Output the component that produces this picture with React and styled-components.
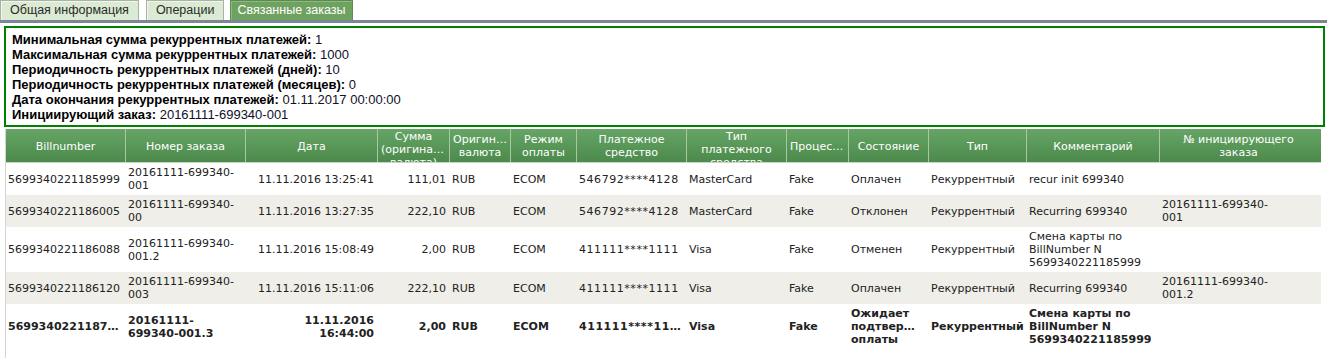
import React from "react";
import styled, { createGlobalStyle } from "styled-components";

const Global = createGlobalStyle`
  html, body { margin: 0; padding: 0; background: #fff; overflow: hidden; }
`;

const COLS = [
  { title: "Billnumber", w: 120, clip: true },
  { title: "Номер заказа", w: 120 },
  { title: "Дата", w: 132, align: "right" },
  { title: "Сумма (оригинальная валюта)", w: 72, align: "right" },
  { title: "Оригинальная валюта", w: 61 },
  { title: "Режим оплаты", w: 66 },
  { title: "Платежное средство", w: 110, clip: true, ls: 0.55 },
  { title: "Тип платежного средства", w: 100 },
  { title: "Процессинг", w: 62 },
  { title: "Состояние", w: 80, clip: true },
  { title: "Тип", w: 98 },
  { title: "Комментарий", w: 133 },
  { title: "№ инициирующего заказа", w: 158, max: 118 },
];
const TEMPLATE = COLS.map((c) => c.w + "px").join(" ") + " 3px";

const ROWS = [
  ["5699340221185999", "20161111-699340-001", "11.11.2016 13:25:41", "111,01", "RUB", "ECOM", "546792****4128", "MasterCard", "Fake", "Оплачен", "Рекуррентный", "recur init 699340", ""],
  ["5699340221186005", "20161111-699340-00", "11.11.2016 13:27:35", "222,10", "RUB", "ECOM", "546792****4128", "MasterCard", "Fake", "Отклонен", "Рекуррентный", "Recurring 699340", "20161111-699340-001"],
  ["5699340221186088", "20161111-699340-001.2", "11.11.2016 15:08:49", "2,00", "RUB", "ECOM", "411111****1111", "Visa", "Fake", "Отменен", "Рекуррентный", "Смена карты по BillNumber N 5699340221185999", ""],
  ["5699340221186120", "20161111-699340-003", "11.11.2016 15:11:06", "222,10", "RUB", "ECOM", "411111****1111", "Visa", "Fake", "Оплачен", "Рекуррентный", "Recurring 699340", "20161111-699340-001.2"],
  ["5699340221187125", "20161111-699340-001.3", "11.11.2016 16:44:00", "2,00", "RUB", "ECOM", "411111****1111", "Visa", "Fake", "Ожидает подтверждения оплаты", "Рекуррентный", "Смена карты по BillNumber N 5699340221185999", ""],
];

const INFO = [
  ["Минимальная сумма рекуррентных платежей:", "1"],
  ["Максимальная сумма рекуррентных платежей:", "1000"],
  ["Периодичность рекуррентных платежей (дней):", "10"],
  ["Периодичность рекуррентных платежей (месяцев):", "0"],
  ["Дата окончания рекуррентных платежей:", "01.11.2017 00:00:00"],
  ["Инициирующий заказ:", "20161111-699340-001"],
];

const Page = styled.div`
  width: 1327px;
`;

const TabBar = styled.div`
  display: flex;
  align-items: flex-end;
  height: 20px;
  border-bottom: 3px solid #7b8798;
`;

const Tab = styled.div`
  box-sizing: border-box;
  height: 20px;
  padding: 0 ${(p) => p.$pad}px;
  margin-right: ${(p) => p.$gap}px;
  font: 12.5px "Liberation Sans", Arial, sans-serif;
  line-height: 19px;
  border: 1px solid ${(p) => (p.$active ? "#5d8c50" : "#aab2a7")};
  border-bottom: none;
  box-shadow: inset 1px 1px 0 ${(p) => (p.$active ? "#8cb97d" : "#f1f7ee")};
  background: ${(p) => (p.$active ? "#6fa160" : "#dbead2")};
  color: ${(p) => (p.$active ? "#fff" : "#2a2a2a")};
  white-space: nowrap;
`;

const InfoBox = styled.div`
  margin: 3px 2px 0 4px;
  border: 2px solid #008000;
  padding: 4px 6px 3px;
  font: 13px "Liberation Sans", Arial, sans-serif;
  line-height: 15px;
  color: #000;
`;

const InfoLine = styled.div`
  white-space: nowrap;
`;

const Label = styled.b`
  font-weight: bold;
`;

const Value = styled.span`
  color: #10102a;
`;

const Grid = styled.div`
  margin: 2px 0 0 5px;
  width: 1316px;
  height: 229px;
  box-sizing: border-box;
  border-left: 1px solid #d4d4d4;
  overflow: hidden;
  font: 11px "DejaVu Sans", Verdana, sans-serif;
`;

const HeadRow = styled.div`
  display: grid;
  grid-template-columns: ${TEMPLATE};
  height: 34px;
  box-sizing: border-box;
  border-bottom: 1px solid #c9d6c6;
  background: linear-gradient(to bottom, #66a566, #4b8a4b);
`;

const HeadCell = styled.div`
  display: flex;
  align-items: safe center;
  justify-content: center;
  min-width: 0;
  box-sizing: border-box;
  padding: 1px 3px 0;
  border-right: 1px solid ${(p) => (p.$last ? "transparent" : "#a6c9a0")};
  overflow: hidden;
  color: #fff;
  line-height: 13px;
  text-align: center;
`;

const HeadText = styled.div`
  width: 100%;
  overflow: hidden;
  text-overflow: ellipsis;
`;

const Row = styled.div`
  display: grid;
  grid-template-columns: ${TEMPLATE};
  background: ${(p) => (p.$alt ? "#efeee8" : "#fff")};
  font-weight: ${(p) => (p.$bold ? "bold" : "normal")};
`;

const Cell = styled.div`
  display: flex;
  align-items: center;
  justify-content: ${(p) => (p.$align === "right" ? "flex-end" : "flex-start")};
  min-width: 0;
  padding: 3px 4px 3px 2px;
  line-height: 13px;
  color: #222;
`;

const CellText = styled.div`
  max-width: ${(p) => (p.$max ? p.$max + "px" : "100%")};
  overflow: ${(p) => (p.$clip ? "hidden" : "visible")};
  text-overflow: ellipsis;
  letter-spacing: ${(p) => (p.$ls ? p.$ls + "px" : "normal")};
  text-align: ${(p) => p.$align || "left"};
`;

export default function App() {
  return (
    <Page>
      <Global />
      <TabBar>
        <Tab $pad={9} $gap={7}>Общая информация</Tab>
        <Tab $pad={9} $gap={6}>Операции</Tab>
        <Tab $pad={6} $gap={0} $active>Связанные заказы</Tab>
      </TabBar>
      <InfoBox>
        {INFO.map(([l, v]) => (
          <InfoLine key={l}>
            <Label>{l}</Label> <Value>{v}</Value>
          </InfoLine>
        ))}
      </InfoBox>
      <Grid>
        <HeadRow>
          {COLS.map((c, i) => (
            <HeadCell key={c.title} $last={i === COLS.length - 1}>
              <HeadText>{c.title}</HeadText>
            </HeadCell>
          ))}
          <HeadCell $last />
        </HeadRow>
        {ROWS.map((r, ri) => (
          <Row key={ri} $alt={ri % 2 === 1} $bold={ri === 4}>
            {r.map((v, ci) => {
              const c = COLS[ci];
              return (
                <Cell key={ci} $align={c.align}>
                  <CellText $align={c.align} $max={c.max} $clip={c.clip} $ls={c.ls}>
                    {v}
                  </CellText>
                </Cell>
              );
            })}
            <Cell />
          </Row>
        ))}
      </Grid>
    </Page>
  );
}
